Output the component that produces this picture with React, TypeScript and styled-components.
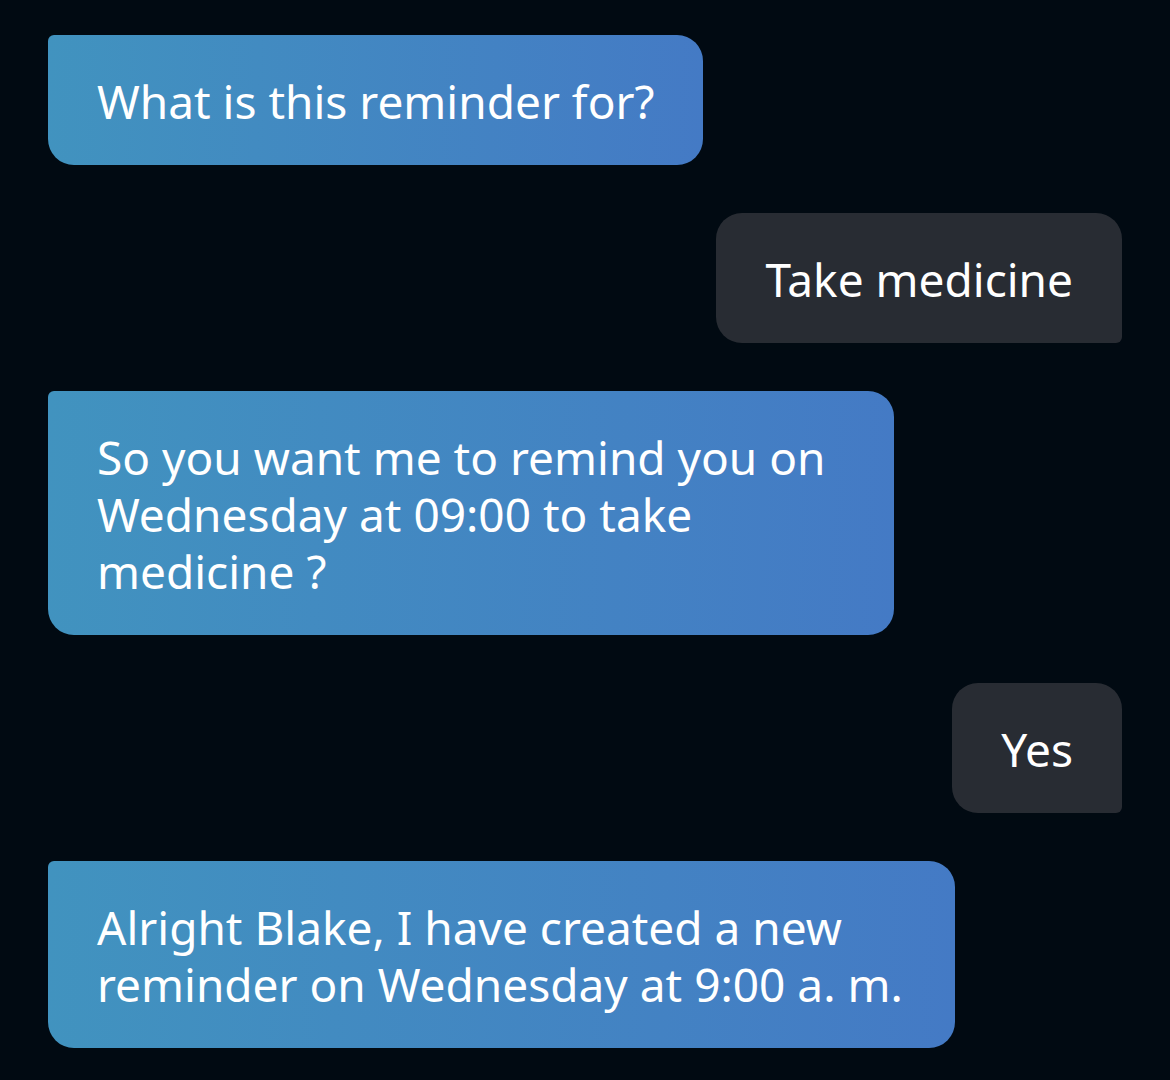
import styled, { createGlobalStyle } from "styled-components";

const GlobalStyle = createGlobalStyle`
  body {
    margin: 0;
    background: #010a12;
  }
`;

const Conversation = styled.main`
  display: flex;
  flex-direction: column;
  gap: 48px;
  padding: 35px 48px 31px;
  font-family: "Noto Sans", "Open Sans", sans-serif;
`;

const Bubble = styled.p<{ $from: "assistant" | "user"; $maxWidth: number }>`
  box-sizing: border-box;
  max-width: min(100%, ${({ $maxWidth }) => $maxWidth}px);
  margin: 0;
  padding: 38px 49px 35px;
  align-self: ${({ $from }) => ($from === "user" ? "flex-end" : "flex-start")};
  border-radius: ${({ $from }) =>
    $from === "user" ? "26px 26px 6px 26px" : "6px 26px 26px 26px"};
  background: ${({ $from }) =>
    $from === "user" ? "#282c33" : "linear-gradient(92deg, #4193bf, #447ac5)"};
  color: #fff;
  font-size: 46px;
  font-weight: 400;
  line-height: 57px;
`;

type Message = { from: "assistant" | "user"; text: string; maxWidth?: number };

const messages: Message[] = [
  { from: "assistant", text: "What is this reminder for?" },
  { from: "user", text: "Take medicine" },
  {
    from: "assistant",
    text: "So you want me to remind you on Wednesday at 09:00 to take medicine ?",
    maxWidth: 846,
  },
  { from: "user", text: "Yes" },
  {
    from: "assistant",
    text: "Alright Blake, I have created a new reminder on Wednesday at 9:00 a. m.",
  },
];

export default function App() {
  return (
    <>
      <GlobalStyle />
      <Conversation>
        {messages.map(({ from, text, maxWidth = 907 }) => (
          <Bubble key={text} $from={from} $maxWidth={maxWidth}>
            {text}
          </Bubble>
        ))}
      </Conversation>
    </>
  );
}
